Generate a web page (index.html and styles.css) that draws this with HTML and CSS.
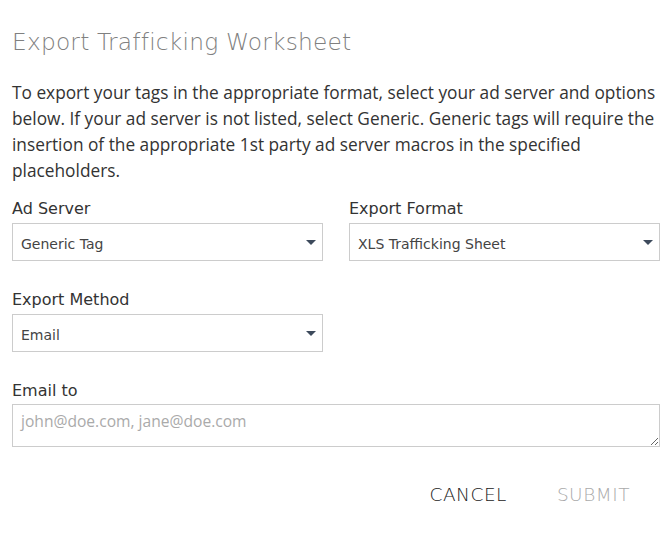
FILE: index.html
```html
<!DOCTYPE html>
<html>
<head>
<meta charset="utf-8">
<link rel="stylesheet" href="styles.css">
</head>
<body>
<div class="dialog">
  <h1 class="title">Export Trafficking Worksheet</h1>
  <p class="intro">To export your tags in the appropriate format, select your ad server and options below. If your ad server is not listed, select Generic. Generic tags will require the insertion of the appropriate 1st party ad server macros in the specified placeholders.</p>
  <div class="row">
    <div class="field">
      <div class="label">Ad Server</div>
      <div class="select"><span>Generic Tag</span><span class="caret"></span></div>
    </div>
    <div class="field">
      <div class="label">Export Format</div>
      <div class="select"><span>XLS Trafficking Sheet</span><span class="caret"></span></div>
    </div>
  </div>
  <div class="row">
    <div class="field">
      <div class="label">Export Method</div>
      <div class="select"><span>Email</span><span class="caret"></span></div>
    </div>
    <div class="field"></div>
  </div>
  <div class="field full">
    <div class="label">Email to</div>
    <textarea class="textarea" placeholder="john@doe.com, jane@doe.com"></textarea>
  </div>
  <div class="actions">
    <button class="btn cancel">CANCEL</button>
    <button class="btn submit">SUBMIT</button>
  </div>
</div>
</body>
</html>
```
FILE: styles.css
```css
html, body {
  margin: 0;
  padding: 0;
  background: #fff;
}
.dialog {
  padding: 26px 10px 0 12px;
  font-family: "DejaVu Sans", sans-serif;
}
.title {
  margin: 0;
  font-family: "DejaVu Sans", sans-serif;
  font-weight: 300;
  font-size: 23.3px;
  line-height: 32px;
  color: #808080;
  letter-spacing: 0.2px;
}
.intro {
  margin: 22px 0 0 0;
  font-family: "Open Sans", sans-serif;
  font-size: 17.3px;
  line-height: 26px;
  color: #333;
}
.row {
  display: flex;
  gap: 26px;
  margin-top: 15px;
}
.row + .row {
  margin-top: 29px;
}
.field {
  flex: 1;
}
.full {
  margin-top: 29px;
}
.label {
  font-family: "DejaVu Sans", sans-serif;
  font-size: 16px;
  line-height: 20px;
  color: #333;
  margin-bottom: 4px;
}
.select {
  height: 38px;
  box-sizing: border-box;
  border: 1px solid #ccc;
  display: flex;
  align-items: center;
  justify-content: space-between;
  padding: 4px 6px 0 8px;
  font-family: "DejaVu Sans", sans-serif;
  font-size: 14px;
  color: #444;
}
.caret {
  width: 0;
  height: 0;
  border-left: 5px solid transparent;
  border-right: 5px solid transparent;
  border-top: 5px solid #3d4a5c;
  margin-top: -4px;
}
.textarea {
  display: block;
  width: 100%;
  box-sizing: border-box;
  height: 43px;
  border: 1px solid #ccc;
  padding: 5px 8px;
  margin: 0;
  margin-top: -1px;
  font-family: "Open Sans", sans-serif;
  font-size: 15.6px;
  color: #333;
  resize: vertical;
}
.textarea::placeholder {
  color: #aaa;
}
.actions {
  display: flex;
  justify-content: flex-end;
  margin-top: 31px;
  padding-right: 30px;
}
.btn {
  background: none;
  border: none;
  font-family: "DejaVu Sans", sans-serif;
  font-weight: 300;
  font-size: 18.5px;
  letter-spacing: 0.5px;
  padding: 6px 0;
  margin-left: 50px;
  cursor: pointer;
}
.cancel { color: #222; }
.submit { color: #aaa; }
```
